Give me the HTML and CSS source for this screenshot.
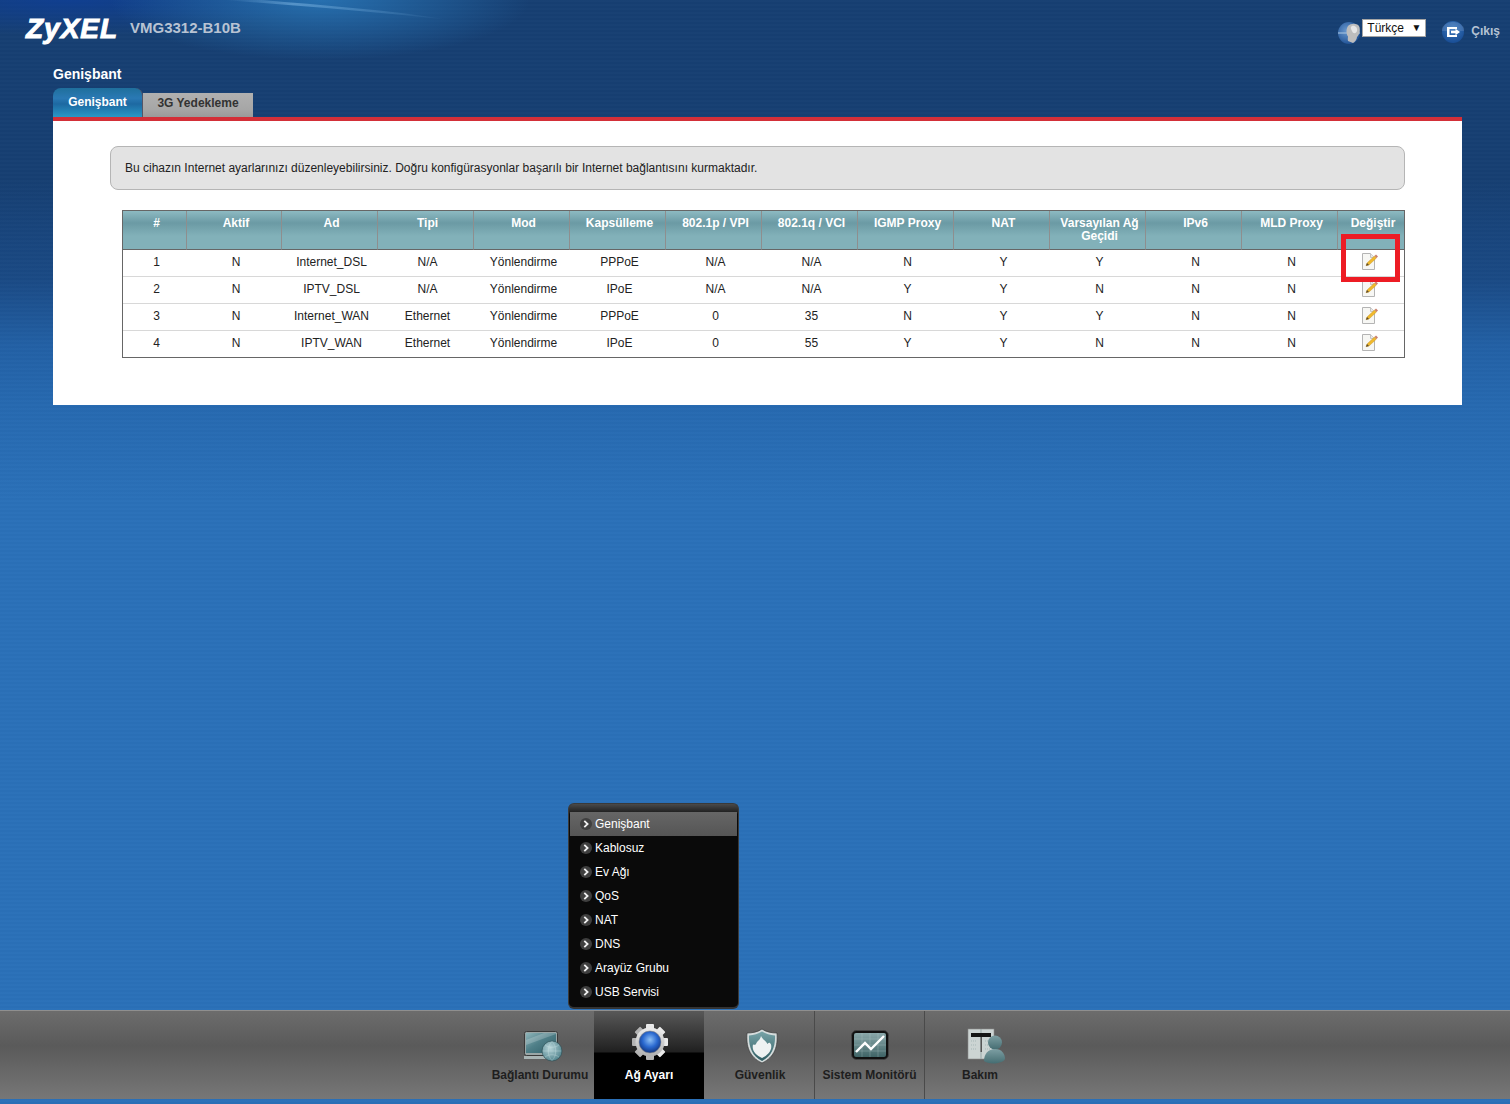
FILE: index.html
```html
<!DOCTYPE html>
<html lang="tr">
<head>
<meta charset="utf-8">
<title>Genişbant</title>
<link rel="stylesheet" href="styles.css">
</head>
<body>
<svg class="defs" width="0" height="0" aria-hidden="true">
  <symbol id="edit" viewBox="0 0 16 17">
    <path d="M.5.5H8.500L12.500 4.500V16.500H.5Z" fill="#f7f7f4" stroke="#b4b4b4"/>
    <path d="M8.500.5V4.500H12.500" fill="#e8e8e8" stroke="#c4c4c4"/>
    <path d="M4 12.700 5 10 12.500 3 14.500 5 7 12Z" fill="#f0b92c" stroke="#c08a20" stroke-width=".4"/>
    <path d="M12.500 3 14 1.500 16 3.500 14.500 5Z" fill="#c9806c"/>
    <path d="M4 12.700 5 10 7 12Z" fill="#5a4a30"/>
  </symbol>
  <symbol id="chev" viewBox="0 0 12 12">
    <circle cx="6" cy="6" r="6" fill="#3f3f3f"/>
    <path d="M4.300 2.800 7.600 6 4.300 9.200" fill="none" stroke="#f0f0f0" stroke-width="1.800"/>
  </symbol>
</svg>

<header class="topbar">
  <svg class="streak" width="500" height="30" viewBox="0 0 500 30" aria-hidden="true">
    <defs><linearGradient id="stk" x1="0" y1="0" x2="1" y2="0"><stop offset="0" stop-color="#8fc4ee" stop-opacity="0"/><stop offset=".3" stop-color="#8fc4ee" stop-opacity=".45"/><stop offset="1" stop-color="#8fc4ee" stop-opacity="0"/></linearGradient></defs>
    <path d="M225 0H262C320 5 390 10 450 20 380 12 300 6 225 0Z" fill="url(#stk)"/>
  </svg>
  <div class="logo">ZyXEL</div>
  <div class="model">VMG3312-B10B</div>
  <div class="account">
    <svg class="user-ico" width="24" height="24" viewBox="0 0 24 24">
      <defs><radialGradient id="ub" cx=".4" cy=".4" r=".7"><stop offset="0" stop-color="#6a9ad0"/><stop offset="1" stop-color="#17498e"/></radialGradient></defs>
      <circle cx="11" cy="12" r="11" fill="url(#ub)"/>
      <path d="M0 11H22V13H0Z" fill="#9dbcdc" opacity=".6"/>
      <path d="M10 20C9.500 18 10 16.500 10 15.500 8 13 8 8 10 5 13 2 20 2 21.500 6 22.500 11 21 14 19 16 19 18 17 21 15 22Z" fill="#bdbdbd"/>
      <path d="M14 5C17 4 20 7 19 10 18 13 15 13 14 10 13 8 12 6 14 5Z" fill="#e6e6e6"/>
    </svg>
    <div class="lang"><span>Türkçe</span><i class="lang-arrow">▼</i></div>
    <svg class="exit-ico" width="22" height="22" viewBox="0 0 22 22">
      <defs><radialGradient id="eb" cx=".5" cy=".35" r=".7"><stop offset="0" stop-color="#3c78bd"/><stop offset="1" stop-color="#164a92"/></radialGradient></defs>
      <circle cx="11" cy="11" r="11" fill="url(#eb)"/>
      <path d="M0 10H22V7C20 3 15 1 11 1S2 3 0 7Z" fill="#fff" opacity=".12"/>
      <path d="M5 6H15V8H7.500V14H15V16H5Z" fill="#fff"/>
      <path d="M9 9.800H13.500V7.800L18 11 13.500 14.200V12.200H9Z" fill="#fff"/>
    </svg>
    <div class="logout">Çıkış</div>
  </div>
</header>

<main class="main">
  <h1 class="title">Genişbant</h1>
  <nav class="tabs">
    <div class="tab tab-on">Genişbant</div>
    <div class="tab tab-off">3G Yedekleme</div>
  </nav>
  <section class="panel">
    <p class="info">Bu cihazın Internet ayarlarınızı düzenleyebilirsiniz. Doğru konfigürasyonlar başarılı bir Internet bağlantısını kurmaktadır.</p>
    <div class="table-wrap">
      <table class="grid">
        <colgroup>
          <col class="c-num"><col class="c-aktif"><col class="c-std"><col class="c-std"><col class="c-std"><col class="c-std"><col class="c-std"><col class="c-std"><col class="c-std"><col class="c-std"><col class="c-std"><col class="c-std"><col class="c-std"><col class="c-edit">
        </colgroup>
        <thead>
          <tr><th>#</th><th>Aktif</th><th>Ad</th><th>Tipi</th><th>Mod</th><th>Kapsülleme</th><th>802.1p / VPI</th><th>802.1q / VCI</th><th>IGMP Proxy</th><th>NAT</th><th>Varsayılan Ağ Geçidi</th><th>IPv6</th><th>MLD Proxy</th><th>Değiştir</th></tr>
        </thead>
        <tbody>
          <tr><td>1</td><td>N</td><td>Internet_DSL</td><td>N/A</td><td>Yönlendirme</td><td>PPPoE</td><td>N/A</td><td>N/A</td><td>N</td><td>Y</td><td>Y</td><td>N</td><td>N</td><td><svg class="edit-ico" width="16" height="17"><use href="#edit"/></svg></td></tr>
          <tr><td>2</td><td>N</td><td>IPTV_DSL</td><td>N/A</td><td>Yönlendirme</td><td>IPoE</td><td>N/A</td><td>N/A</td><td>Y</td><td>Y</td><td>N</td><td>N</td><td>N</td><td><svg class="edit-ico" width="16" height="17"><use href="#edit"/></svg></td></tr>
          <tr><td>3</td><td>N</td><td>Internet_WAN</td><td>Ethernet</td><td>Yönlendirme</td><td>PPPoE</td><td>0</td><td>35</td><td>N</td><td>Y</td><td>Y</td><td>N</td><td>N</td><td><svg class="edit-ico" width="16" height="17"><use href="#edit"/></svg></td></tr>
          <tr><td>4</td><td>N</td><td>IPTV_WAN</td><td>Ethernet</td><td>Yönlendirme</td><td>IPoE</td><td>0</td><td>55</td><td>Y</td><td>Y</td><td>N</td><td>N</td><td>N</td><td><svg class="edit-ico" width="16" height="17"><use href="#edit"/></svg></td></tr>
        </tbody>
      </table>
      <div class="callout"></div>
    </div>
  </section>
</main>

<footer class="dock">
  <div class="dock-item item-link">
    <svg class="dock-ico ico-link" width="42" height="34" viewBox="0 0 42 34">
      <defs>
        <linearGradient id="scr" x1="0" y1="0" x2="1" y2="1"><stop offset="0" stop-color="#8fb6bb"/><stop offset=".45" stop-color="#4f7f88"/><stop offset="1" stop-color="#2f5f68"/></linearGradient>
        <radialGradient id="glb" cx=".4" cy=".35" r=".7"><stop offset="0" stop-color="#b6d4d8"/><stop offset="1" stop-color="#4f828c"/></radialGradient>
      </defs>
      <rect x="2.500" y="1.500" width="33" height="24" rx="2" fill="#9aa6a6" stroke="#3a3a3a"/>
      <rect x="4" y="3" width="30" height="20" fill="url(#scr)"/>
      <path d="M4 15 34 4V3H22L4 10Z" fill="#fff" opacity=".2"/>
      <path d="M2 26H34L36 29H2Z" fill="#a8b4b4"/>
      <circle cx="30" cy="21" r="10" fill="url(#glb)" stroke="#2c4e54" stroke-width=".6"/>
      <path d="M23 15C27 18 33 18 37 15M21 21H39M23 27C27 24 33 24 37 27M30 11.500C25 16 25 26 30 30.500M30 11.500C35 16 35 26 30 30.500" fill="none" stroke="#d7eaec" stroke-width=".5" opacity=".6"/>
    </svg>
    <span class="dock-label">Bağlantı Durumu</span>
  </div>
  <div class="dock-item dock-on">
    <div class="menu">
      <ul class="menu-list">
        <li class="menu-row menu-row-on"><svg class="chev" width="12" height="12"><use href="#chev"/></svg>Genişbant</li>
        <li class="menu-row"><svg class="chev" width="12" height="12"><use href="#chev"/></svg>Kablosuz</li>
        <li class="menu-row"><svg class="chev" width="12" height="12"><use href="#chev"/></svg>Ev Ağı</li>
        <li class="menu-row"><svg class="chev" width="12" height="12"><use href="#chev"/></svg>QoS</li>
        <li class="menu-row"><svg class="chev" width="12" height="12"><use href="#chev"/></svg>NAT</li>
        <li class="menu-row"><svg class="chev" width="12" height="12"><use href="#chev"/></svg>DNS</li>
        <li class="menu-row"><svg class="chev" width="12" height="12"><use href="#chev"/></svg>Arayüz Grubu</li>
        <li class="menu-row"><svg class="chev" width="12" height="12"><use href="#chev"/></svg>USB Servisi</li>
      </ul>
    </div>
    <svg class="dock-ico ico-gear" width="40" height="40" viewBox="0 0 40 40">
      <defs>
        <radialGradient id="orb" cx=".5" cy=".4" r=".6"><stop offset="0" stop-color="#8ec0f5"/><stop offset=".55" stop-color="#2a69d0"/><stop offset="1" stop-color="#12357f"/></radialGradient>
        <linearGradient id="stl" x1="0" y1="0" x2="0" y2="1"><stop offset="0" stop-color="#ececec"/><stop offset="1" stop-color="#b0b0b0"/></linearGradient>
      </defs>
      <g fill="url(#stl)">
        <rect x="16" y="2" width="8" height="36" rx="1"/>
        <rect x="16" y="2" width="8" height="36" rx="1" transform="rotate(45 20 20)"/>
        <rect x="16" y="2" width="8" height="36" rx="1" transform="rotate(90 20 20)"/>
        <rect x="16" y="2" width="8" height="36" rx="1" transform="rotate(135 20 20)"/>
        <circle cx="20" cy="20" r="14.500"/>
      </g>
      <circle cx="20" cy="20" r="11" fill="url(#orb)" stroke="#8a8a8a" stroke-width=".6"/>
    </svg>
    <span class="dock-label">Ağ Ayarı</span>
  </div>
  <div class="dock-item item-shield">
    <svg class="dock-ico ico-shield" width="34" height="36" viewBox="0 0 34 36">
      <defs><linearGradient id="shd" x1="0" y1="0" x2="0" y2="1"><stop offset="0" stop-color="#78a4a8"/><stop offset="1" stop-color="#2f5c62"/></linearGradient></defs>
      <path d="M17 1C21 4 27 5 32 5 33 18 30 29 17 35 4 29 1 18 2 5 7 5 13 4 17 1Z" fill="#d5dcdc" stroke="#3a3a3a" stroke-width=".7"/>
      <path d="M17 3.500C21 6 25 7 30 7.500 30.500 18 27 28 17 33 7 28 3.500 18 4 7.500 9 7 13 6 17 3.500Z" fill="url(#shd)"/>
      <path d="M16 8C18 12 21 12.500 22.500 16 24 14 25 14.500 26 16.500 27.500 22 23 27 17 30 11 27 6.500 23 8 16.500 9.500 17 10 17 11 16 12 13 15 12.500 16 8Z" fill="#eef2f2"/>
    </svg>
    <span class="dock-label">Güvenlik</span>
  </div>
  <div class="dock-item item-plain">
    <svg class="dock-ico ico-chart" width="40" height="32" viewBox="0 0 40 32">
      <defs><linearGradient id="mon" x1="0" y1="0" x2="0" y2="1"><stop offset="0" stop-color="#8aa8aa"/><stop offset="1" stop-color="#3f6466"/></linearGradient></defs>
      <rect x="1.500" y="1.500" width="37" height="29" rx="5" fill="#111" stroke="#444"/>
      <rect x="4" y="4" width="32" height="24" rx="2" fill="url(#mon)"/>
      <path d="M12 4V28M20 4V28M28 4V28M4 10H36M4 16H36M4 22H36" stroke="#c6d6d6" stroke-width=".5" opacity=".5"/>
      <path d="M6 23 15 14 21 20 34 7" fill="none" stroke="#fff" stroke-width="2.400"/>
    </svg>
    <span class="dock-label">Sistem Monitörü</span>
  </div>
  <div class="dock-item item-plain">
    <svg class="dock-ico ico-tools" width="38" height="36" viewBox="0 0 38 36">
      <defs><linearGradient id="pp" x1="0" y1="0" x2="0" y2="1"><stop offset="0" stop-color="#7d9fa3"/><stop offset="1" stop-color="#456d72"/></linearGradient></defs>
      <rect x="1" y="1" width="26" height="30" fill="#ccd4d3" stroke="#8a8a8a" stroke-width=".6"/>
      <path d="M14 1V31" stroke="#9aa8a8"/>
      <rect x="4" y="5" width="20" height="4" fill="#151515"/>
      <rect x="13.500" y="9" width="1.500" height="15" fill="#555"/>
      <path d="M4 13H10M4 17H10M4 21H10M18 13H24M18 17H24M18 21H24" stroke="#a7b7b7" stroke-dasharray="1 1"/>
      <circle cx="28" cy="14.500" r="7" fill="url(#pp)"/>
      <path d="M17 33C17 26 21 21 28 21S38 26 38 31C36 36 21 37 17 33Z" fill="url(#pp)"/>
    </svg>
    <span class="dock-label">Bakım</span>
  </div>
</footer>
</body>
</html>
```

FILE: styles.css
```css
* { box-sizing: border-box; }

html, body { margin: 0; padding: 0; }

body {
  height: 1104px;
  overflow: hidden;
  display: flex;
  flex-direction: column;
  font-family: "Liberation Sans", Arial, sans-serif;
  font-size: 12px;
  color: #222;
  background-color: #2a70b8;
  background-image:
    radial-gradient(ellipse 210px 60px at 320px 0, rgba(44, 128, 196, .75), rgba(44, 128, 196, 0)),
    radial-gradient(ellipse 240px 36px at 70px 0, rgba(12, 62, 160, .65), rgba(12, 62, 160, 0)),
    repeating-linear-gradient(180deg, rgba(255, 255, 255, .01) 0 2px, rgba(0, 0, 0, .01) 2px 4px),
    linear-gradient(180deg, #163f72 0, #163f72 180px, #1a4a85 280px, #2260a5 345px, #2669b0 405px, #2a70b8 500px);
}

.defs { position: absolute; }

/* top bar */
.topbar {
  position: relative;
  height: 62px;
  flex: none;
  display: flex;
  padding-left: 26px;
  padding-right: 10px;
}

.streak {
  position: absolute;
  top: 0;
  left: 0;
}

.logo {
  position: relative;
  width: 104px;
  margin-top: 12px;
  height: 34px;
  font-size: 28px;
  line-height: 34px;
  font-weight: 700;
  font-style: italic;
  letter-spacing: 1px;
  color: #fff;
  -webkit-text-stroke: 1px #fff;
}

.model {
  position: relative;
  margin-top: 19px;
  font-size: 15px;
  line-height: 18px;
  font-weight: 700;
  color: #b8c3d3;
}

.account {
  margin-left: auto;
  display: flex;
  align-items: flex-start;
}

.user-ico { margin-top: 21px; }

.lang {
  width: 64px;
  height: 18px;
  margin-top: 19px;
  padding: 0 3px 0 4px;
  display: flex;
  justify-content: space-between;
  align-items: center;
  background: #fff;
  border: 1px solid #a5a5a5;
  color: #111;
  line-height: 14px;
}

.lang-arrow {
  font-style: normal;
  font-size: 10px;
  padding-right: 1px;
}

.exit-ico {
  margin-top: 21px;
  margin-left: 16px;
}

.logout {
  margin-top: 24px;
  margin-left: 7px;
  line-height: 14px;
  font-weight: 700;
  color: #b4c2d3;
}

/* content */
.main {
  width: 1409px;
  margin-left: 53px;
  flex: none;
}

.title {
  margin: 0;
  height: 26px;
  font-size: 14px;
  line-height: 24px;
  font-weight: 700;
  color: #fff;
}

.tabs {
  height: 29px;
  display: flex;
  align-items: flex-end;
}

.tab {
  font-weight: 700;
  text-align: center;
}

.tab-on {
  width: 90px;
  height: 29px;
  line-height: 29px;
  border-radius: 8px 8px 0 0;
  color: #fff;
  border-right: 1px solid #556;
  background: linear-gradient(180deg, #1f6f9c 0, #2a79b4 35%, #1d69a2 55%, #2a97c6 100%);
}

.tab-off {
  width: 110px;
  height: 24px;
  line-height: 20px;
  color: #333;
  background: linear-gradient(180deg, #b0b0b0 0, #a6a6a6 70%, #9a9a9a 100%);
}

.panel {
  height: 288px;
  padding: 25px 57px 0;
  background: #fff;
  border-top: 4px solid #d32f38;
}

.info {
  margin: 0 0 20px;
  height: 44px;
  padding-left: 14px;
  line-height: 42px;
  background: #e3e3e3;
  border: 1px solid #b5b5b5;
  border-radius: 8px;
  color: #222;
}

.table-wrap { position: relative; }

.grid {
  width: 1283px;
  margin-left: 12px;
  table-layout: fixed;
  border-collapse: separate;
  border-spacing: 0;
  border: 1px solid #666;
}

.c-num { width: 64px; }
.c-aktif { width: 95px; }
.c-std { width: 96px; }
.c-edit { width: 66px; }

.grid th {
  height: 39px;
  padding: 6px 3px 0 7px;
  vertical-align: top;
  font-size: 12px;
  line-height: 13px;
  font-weight: 700;
  color: #fff;
  border-right: 1px solid #8e8e8e;
  border-bottom: 1px solid #666;
  background: linear-gradient(180deg, #8dbac2 0, #6b9aa4 12px, #82b1b9 25px, #82b1b9 100%);
}

.grid th:last-child { border-right: 0; }

.grid td {
  height: 27px;
  padding: 0 0 3px 3px;
  text-align: center;
  line-height: 14px;
  color: #222;
  border-bottom: 1px solid #d8d8d8;
}

.grid tbody tr:last-child td {
  height: 26px;
  border-bottom: 0;
}

.edit-ico {
  display: block;
  margin: 0 auto 1px;
  position: relative;
  left: -3px;
}

.callout {
  position: absolute;
  top: 24px;
  right: 5px;
  width: 59px;
  height: 48px;
  border: 5px solid #ed1c24;
}

/* dock */
.dock {
  margin-top: auto;
  margin-bottom: 5px;
  height: 89px;
  flex: none;
  display: flex;
  justify-content: center;
  padding-left: 9px;
  border-top: 1px solid #8f8f8f;
  background: linear-gradient(180deg, #6c6c6c 0, #5a5a5a 40%, #777 100%);
}

.dock-item {
  position: relative;
  width: 110px;
  display: flex;
  flex-direction: column;
  align-items: center;
  justify-content: flex-start;
  border-right: 1px solid #4a4a4a;
}

.dock-item:first-child { border-right: 0; }
.dock-item:last-child { border-right: 0; }

.item-link { padding-left: 2px; }

.item-shield {
  width: 111px;
  padding-left: 2px;
}

.dock-ico {
  position: absolute;
  top: 19px;
  left: 50%;
  transform: translateX(-50%);
}

.ico-link { margin-left: 4px; }
.ico-gear { top: 11px; margin-left: 1px; }
.ico-shield { top: 17px; margin-left: 3px; }
.ico-chart { top: 18px; }
.ico-tools { top: 17px; margin-left: 6px; }

.dock-label {
  margin-top: 57px;
  font-weight: 700;
  line-height: 14px;
  color: #1e1e1e;
  white-space: nowrap;
}

.dock-on {
  background: linear-gradient(180deg, #585858 0, #202020 41px, #000 42px, #000 100%);
  border-right: 0;
}

.dock-on .dock-label { color: #fff; }

/* popup menu */
.menu {
  position: absolute;
  left: -26px;
  bottom: calc(100% + 2px);
  width: 171px;
  height: 206px;
  padding: 8px 1px 0;
  background: linear-gradient(180deg, #4a4a4a 0, #1c1c1c 9px, #0a0a0a 10px);
  border: 1px solid #3a3a3a;
  border-bottom: 2px solid #333;
  border-radius: 6px;
}

.menu-list {
  margin: 0;
  padding: 0;
  list-style: none;
}

.menu-row {
  height: 24px;
  display: flex;
  align-items: center;
  gap: 3px;
  padding-left: 10px;
  color: #fff;
  line-height: 14px;
}

.menu-row-on {
  background: linear-gradient(180deg, #666 0, #555 100%);
}

.chev { flex: none; }
```
